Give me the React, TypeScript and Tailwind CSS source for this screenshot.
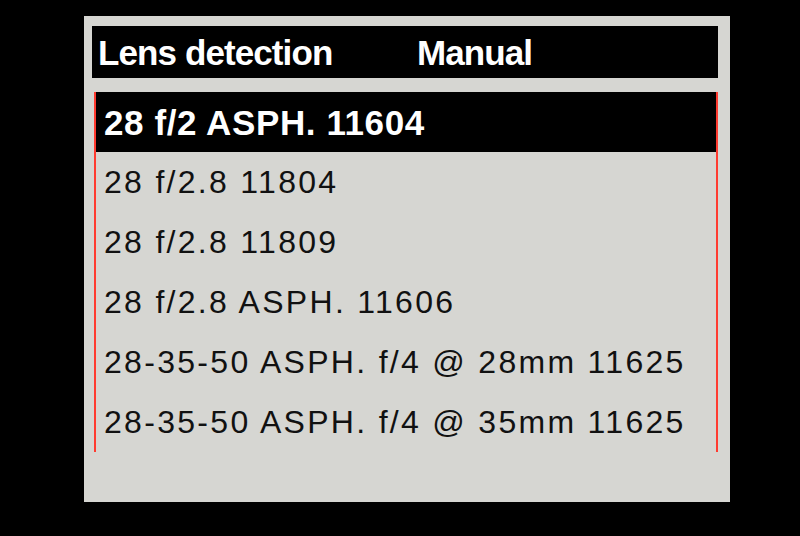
const lenses = [
  "28 f/2 ASPH. 11604",
  "28 f/2.8 11804",
  "28 f/2.8 11809",
  "28 f/2.8 ASPH. 11606",
  "28-35-50 ASPH. f/4 @ 28mm 11625",
  "28-35-50 ASPH. f/4 @ 35mm 11625",
];

export default function App() {
  const selected = 0;

  return (
    <div
      className="h-[536px] w-[800px] bg-black pl-[84px] pt-[16px]"
      style={{ fontFamily: '"Liberation Sans", Arial, sans-serif' }}
    >
      <div className="flex h-[486px] w-[646px] flex-col bg-[#d6d6d2] pl-[8px] pt-[10px]">
        <div className="flex h-[52px] w-[626px] items-center bg-black pl-[6px] text-[35px] font-bold leading-none tracking-[-0.9px] text-white">
          <span className="w-[319px]">Lens detection</span>
          <span>Manual</span>
        </div>

        <div className="ml-[2px] mt-[14px] flex w-[624px] flex-col border-x-2 border-[#ff3b30]">
          {lenses.map((name, i) =>
            i === selected ? (
              <div
                key={name}
                className="flex h-[60px] items-center bg-black pl-[8px] text-[35px] font-bold leading-none tracking-[0.6px] text-white"
              >
                {name}
              </div>
            ) : (
              <div
                key={name}
                className="flex h-[60px] items-center pl-[8px] text-[32px] leading-none tracking-[2.3px] text-[#111]"
              >
                {name}
              </div>
            )
          )}
        </div>
      </div>
    </div>
  );
}
